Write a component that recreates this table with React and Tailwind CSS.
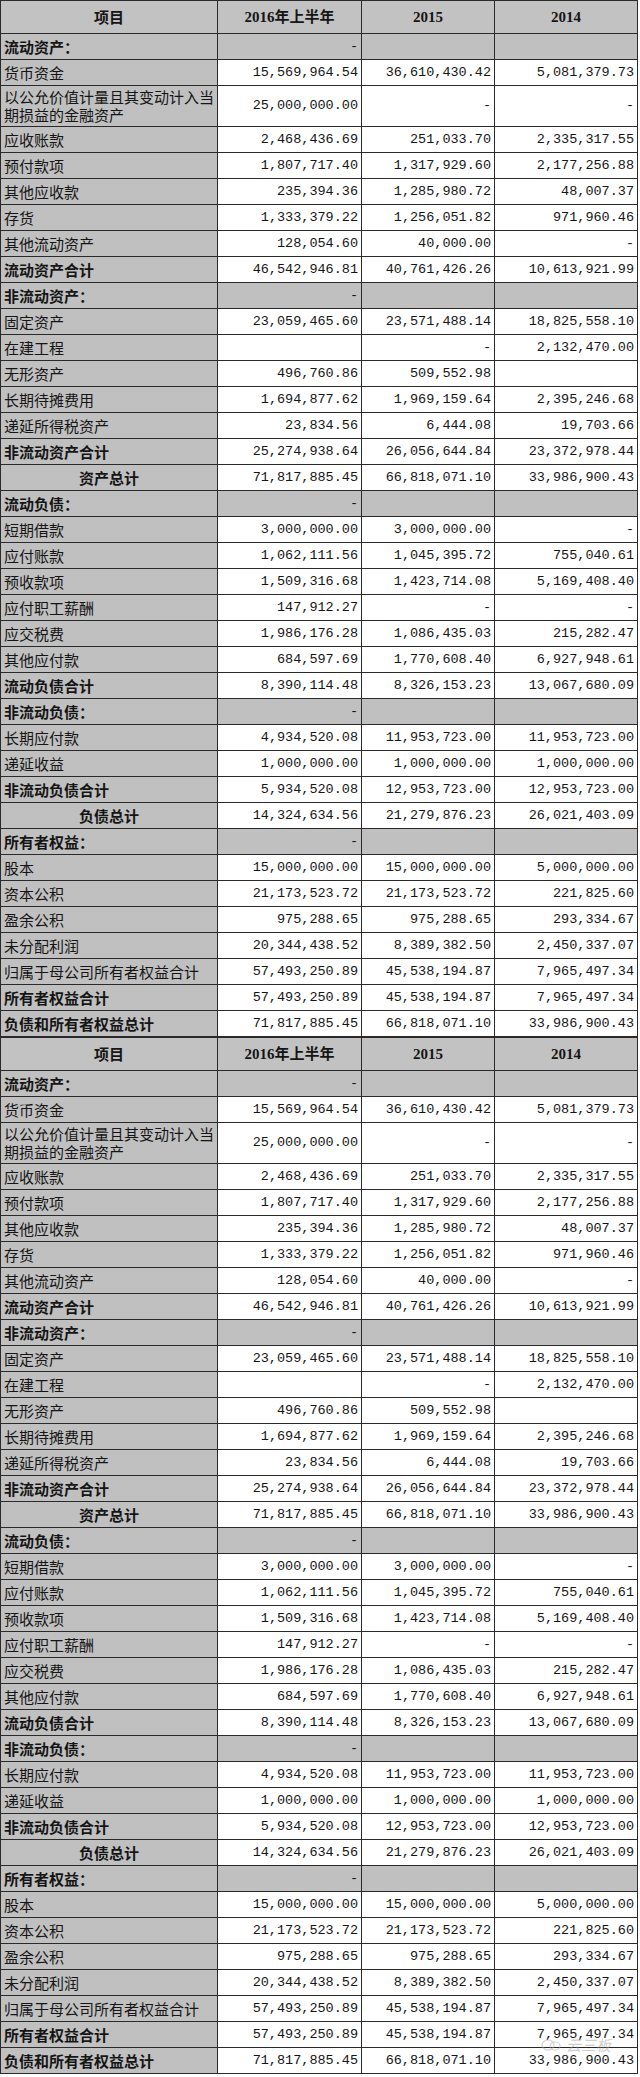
const rows = [
  ['sec', '流动资产：', '-', '', ''],
  ['', '货币资金', '15,569,964.54', '36,610,430.42', '5,081,379.73'],
  ['two', '以公允价值计量且其变动计入当期损益的金融资产', '25,000,000.00', '-', '-'],
  ['', '应收账款', '2,468,436.69', '251,033.70', '2,335,317.55'],
  ['', '预付款项', '1,807,717.40', '1,317,929.60', '2,177,256.88'],
  ['', '其他应收款', '235,394.36', '1,285,980.72', '48,007.37'],
  ['', '存货', '1,333,379.22', '1,256,051.82', '971,960.46'],
  ['', '其他流动资产', '128,054.60', '40,000.00', '-'],
  ['bold', '流动资产合计', '46,542,946.81', '40,761,426.26', '10,613,921.99'],
  ['sec', '非流动资产：', '-', '', ''],
  ['', '固定资产', '23,059,465.60', '23,571,488.14', '18,825,558.10'],
  ['', '在建工程', '', '-', '2,132,470.00'],
  ['', '无形资产', '496,760.86', '509,552.98', ''],
  ['', '长期待摊费用', '1,694,877.62', '1,969,159.64', '2,395,246.68'],
  ['', '递延所得税资产', '23,834.56', '6,444.08', '19,703.66'],
  ['bold', '非流动资产合计', '25,274,938.64', '26,056,644.84', '23,372,978.44'],
  ['total', '资产总计', '71,817,885.45', '66,818,071.10', '33,986,900.43'],
  ['sec', '流动负债：', '-', '', ''],
  ['', '短期借款', '3,000,000.00', '3,000,000.00', '-'],
  ['', '应付账款', '1,062,111.56', '1,045,395.72', '755,040.61'],
  ['', '预收款项', '1,509,316.68', '1,423,714.08', '5,169,408.40'],
  ['', '应付职工薪酬', '147,912.27', '-', '-'],
  ['', '应交税费', '1,986,176.28', '1,086,435.03', '215,282.47'],
  ['', '其他应付款', '684,597.69', '1,770,608.40', '6,927,948.61'],
  ['bold', '流动负债合计', '8,390,114.48', '8,326,153.23', '13,067,680.09'],
  ['sec', '非流动负债：', '-', '', ''],
  ['', '长期应付款', '4,934,520.08', '11,953,723.00', '11,953,723.00'],
  ['', '递延收益', '1,000,000.00', '1,000,000.00', '1,000,000.00'],
  ['bold', '非流动负债合计', '5,934,520.08', '12,953,723.00', '12,953,723.00'],
  ['total', '负债总计', '14,324,634.56', '21,279,876.23', '26,021,403.09'],
  ['sec', '所有者权益：', '-', '', ''],
  ['', '股本', '15,000,000.00', '15,000,000.00', '5,000,000.00'],
  ['', '资本公积', '21,173,523.72', '21,173,523.72', '221,825.60'],
  ['', '盈余公积', '975,288.65', '975,288.65', '293,334.67'],
  ['', '未分配利润', '20,344,438.52', '8,389,382.50', '2,450,337.07'],
  ['', '归属于母公司所有者权益合计', '57,493,250.89', '45,538,194.87', '7,965,497.34'],
  ['bold', '所有者权益合计', '57,493,250.89', '45,538,194.87', '7,965,497.34'],
  ['bold', '负债和所有者权益总计', '71,817,885.45', '66,818,071.10', '33,986,900.43'],
]

const cn = { fontFamily: '"Noto Sans CJK SC", "Liberation Sans", sans-serif' }
const num = { fontFamily: '"Liberation Mono", "DejaVu Sans Mono", monospace' }
const head = { fontFamily: '"Liberation Serif", "Noto Sans CJK SC", serif' }

function Sheet() {
  return (
    <table className="table-fixed border-collapse w-[637px] text-[#151515]">
      <colgroup>
        <col className="w-[217px]" />
        <col className="w-[144px]" />
        <col className="w-[133px]" />
        <col className="w-[143px]" />
      </colgroup>
      <tbody>
        <tr className="h-[33px] bg-[#c2c2c2]">
          <td className="border border-[#2a2a2a] p-0 text-center text-[15px] leading-[18px] font-bold" style={cn}>项目</td>
          <td className="border border-[#2a2a2a] p-0 text-center text-[15px] leading-[18px] font-bold" style={head}>2016年上半年</td>
          <td className="border border-[#2a2a2a] p-0 text-center text-[15px] leading-[18px] font-bold" style={head}>2015</td>
          <td className="border border-[#2a2a2a] p-0 text-center text-[15px] leading-[18px] font-bold" style={head}>2014</td>
        </tr>
        {rows.map((r, i) => {
          const [kind, label, a, b, c] = r
          const sec = kind === 'sec'
          const bold = kind === 'sec' || kind === 'bold' || kind === 'total'
          return (
            <tr key={i} className={kind === 'two' ? 'h-[41px]' : 'h-[26px]'}>
              <td
                className={
                  'border border-[#2a2a2a] bg-[#c0c0c0] py-0 px-[3px] text-[15px] leading-[18px] ' +
                  (bold ? 'font-bold ' : '') +
                  (kind === 'total' ? 'text-center' : 'text-left')
                }
                style={cn}
              >
                {label}
              </td>
              {[a, b, c].map((v, j) => (
                <td
                  key={j}
                  className={
                    'border border-[#2a2a2a] py-0 pl-0 pr-[3px] text-right text-[13.5px] leading-[18px] whitespace-nowrap ' +
                    (sec ? 'bg-[#c0c0c0]' : 'bg-white')
                  }
                  style={num}
                >
                  {v}
                </td>
              ))}
            </tr>
          )
        })}
      </tbody>
    </table>
  )
}

export default function App() {
  return (
    <div className="relative w-[640px] bg-white">
      <Sheet />
      <Sheet />
      {/* watermark */}
      <div className="absolute left-[540px] top-[2034px] flex items-center gap-1 opacity-50 text-[#a0a0a0] pointer-events-none">
        <svg width="22" height="14" viewBox="0 0 22 14" fill="none" stroke="#a8a8a8" strokeWidth="1.2">
          <ellipse cx="8" cy="7" rx="6" ry="5" />
          <ellipse cx="15" cy="8" rx="5" ry="4" />
        </svg>
        <span className="text-[15px] italic" style={cn}>云三板</span>
      </div>
    </div>
  )
}
